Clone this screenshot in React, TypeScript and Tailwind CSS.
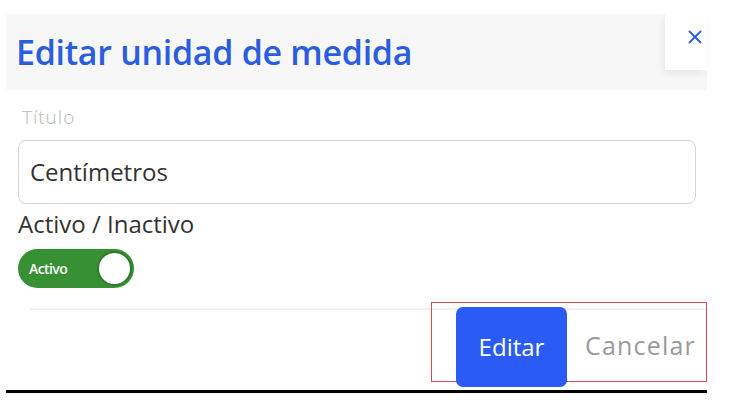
import { X } from "lucide-react";

const font = { fontFamily: "'Open Sans', 'Noto Sans', sans-serif" };

export default function App() {
  return (
    <div className="w-[732px] h-[406px] bg-white overflow-hidden" style={font}>
      <div className="ml-[6px] w-[701px] pt-[14px]">
        {/* header */}
        <div className="flex h-[76px] items-start justify-between bg-[#f7f7f7]">
          <h2 className="self-center pl-[10px] text-[34px] leading-[40px] font-semibold tracking-[-0.3px] text-[#2b5ddf]">
            Editar unidad de medida
          </h2>
          <button className="flex h-[56px] w-[42px] items-start justify-end bg-white pt-[12px] pr-[1px] shadow-[-2px_4px_8px_rgba(0,0,0,0.06)]">
            <X size={22} strokeWidth={2} className="text-[#2b5ddf]" />
          </button>
        </div>

        {/* body */}
        <div className="pl-[12px] pt-[14px]">
          <p className="pl-[4px] text-[19px] leading-[26px] font-light tracking-[1px] text-[#b8b8b8]">Título</p>
          <div className="mt-[10px] flex h-[64px] w-[678px] items-center rounded-[8px] border border-[#d6d6d6] px-[11px]">
            <span className="text-[24px] text-[#333]">Centímetros</span>
          </div>
          <p className="mt-[4px] text-[24px] leading-[32px] text-[#333]">Activo / Inactivo</p>
          <div className="mt-[9px] flex h-[39px] w-[116px] items-center justify-between rounded-full bg-[#379134] pl-[11px] pr-[2px]">
            <span className="text-[14px] font-semibold tracking-[-0.6px] text-white">Activo</span>
            <span className="h-[35px] w-[35px] rounded-full border-2 border-[#2f7a2d] bg-white" />
          </div>
        </div>

        {/* footer */}
        <div className="mt-[20px] ml-[24px] h-[2px] bg-[#f0f0f0]" />
        <div className="-mt-[8px] flex justify-end">
          <div className="flex h-[80px] w-[276px] items-start border border-[#d44b4b] pl-[24px]">
            <button className="mt-[4px] flex h-[80px] w-[111px] items-center justify-center rounded-[7px] bg-[#2a5bf4] text-[24px] text-white">
              Editar
            </button>
            <span className="mt-[4px] flex h-[77px] items-center pl-[18px] text-[25px] tracking-[1.2px] text-[#9a9a9a]">
              Cancelar
            </span>
          </div>
        </div>
        <div className="mt-[8px] h-[3px] bg-black" />
      </div>
    </div>
  );
}
